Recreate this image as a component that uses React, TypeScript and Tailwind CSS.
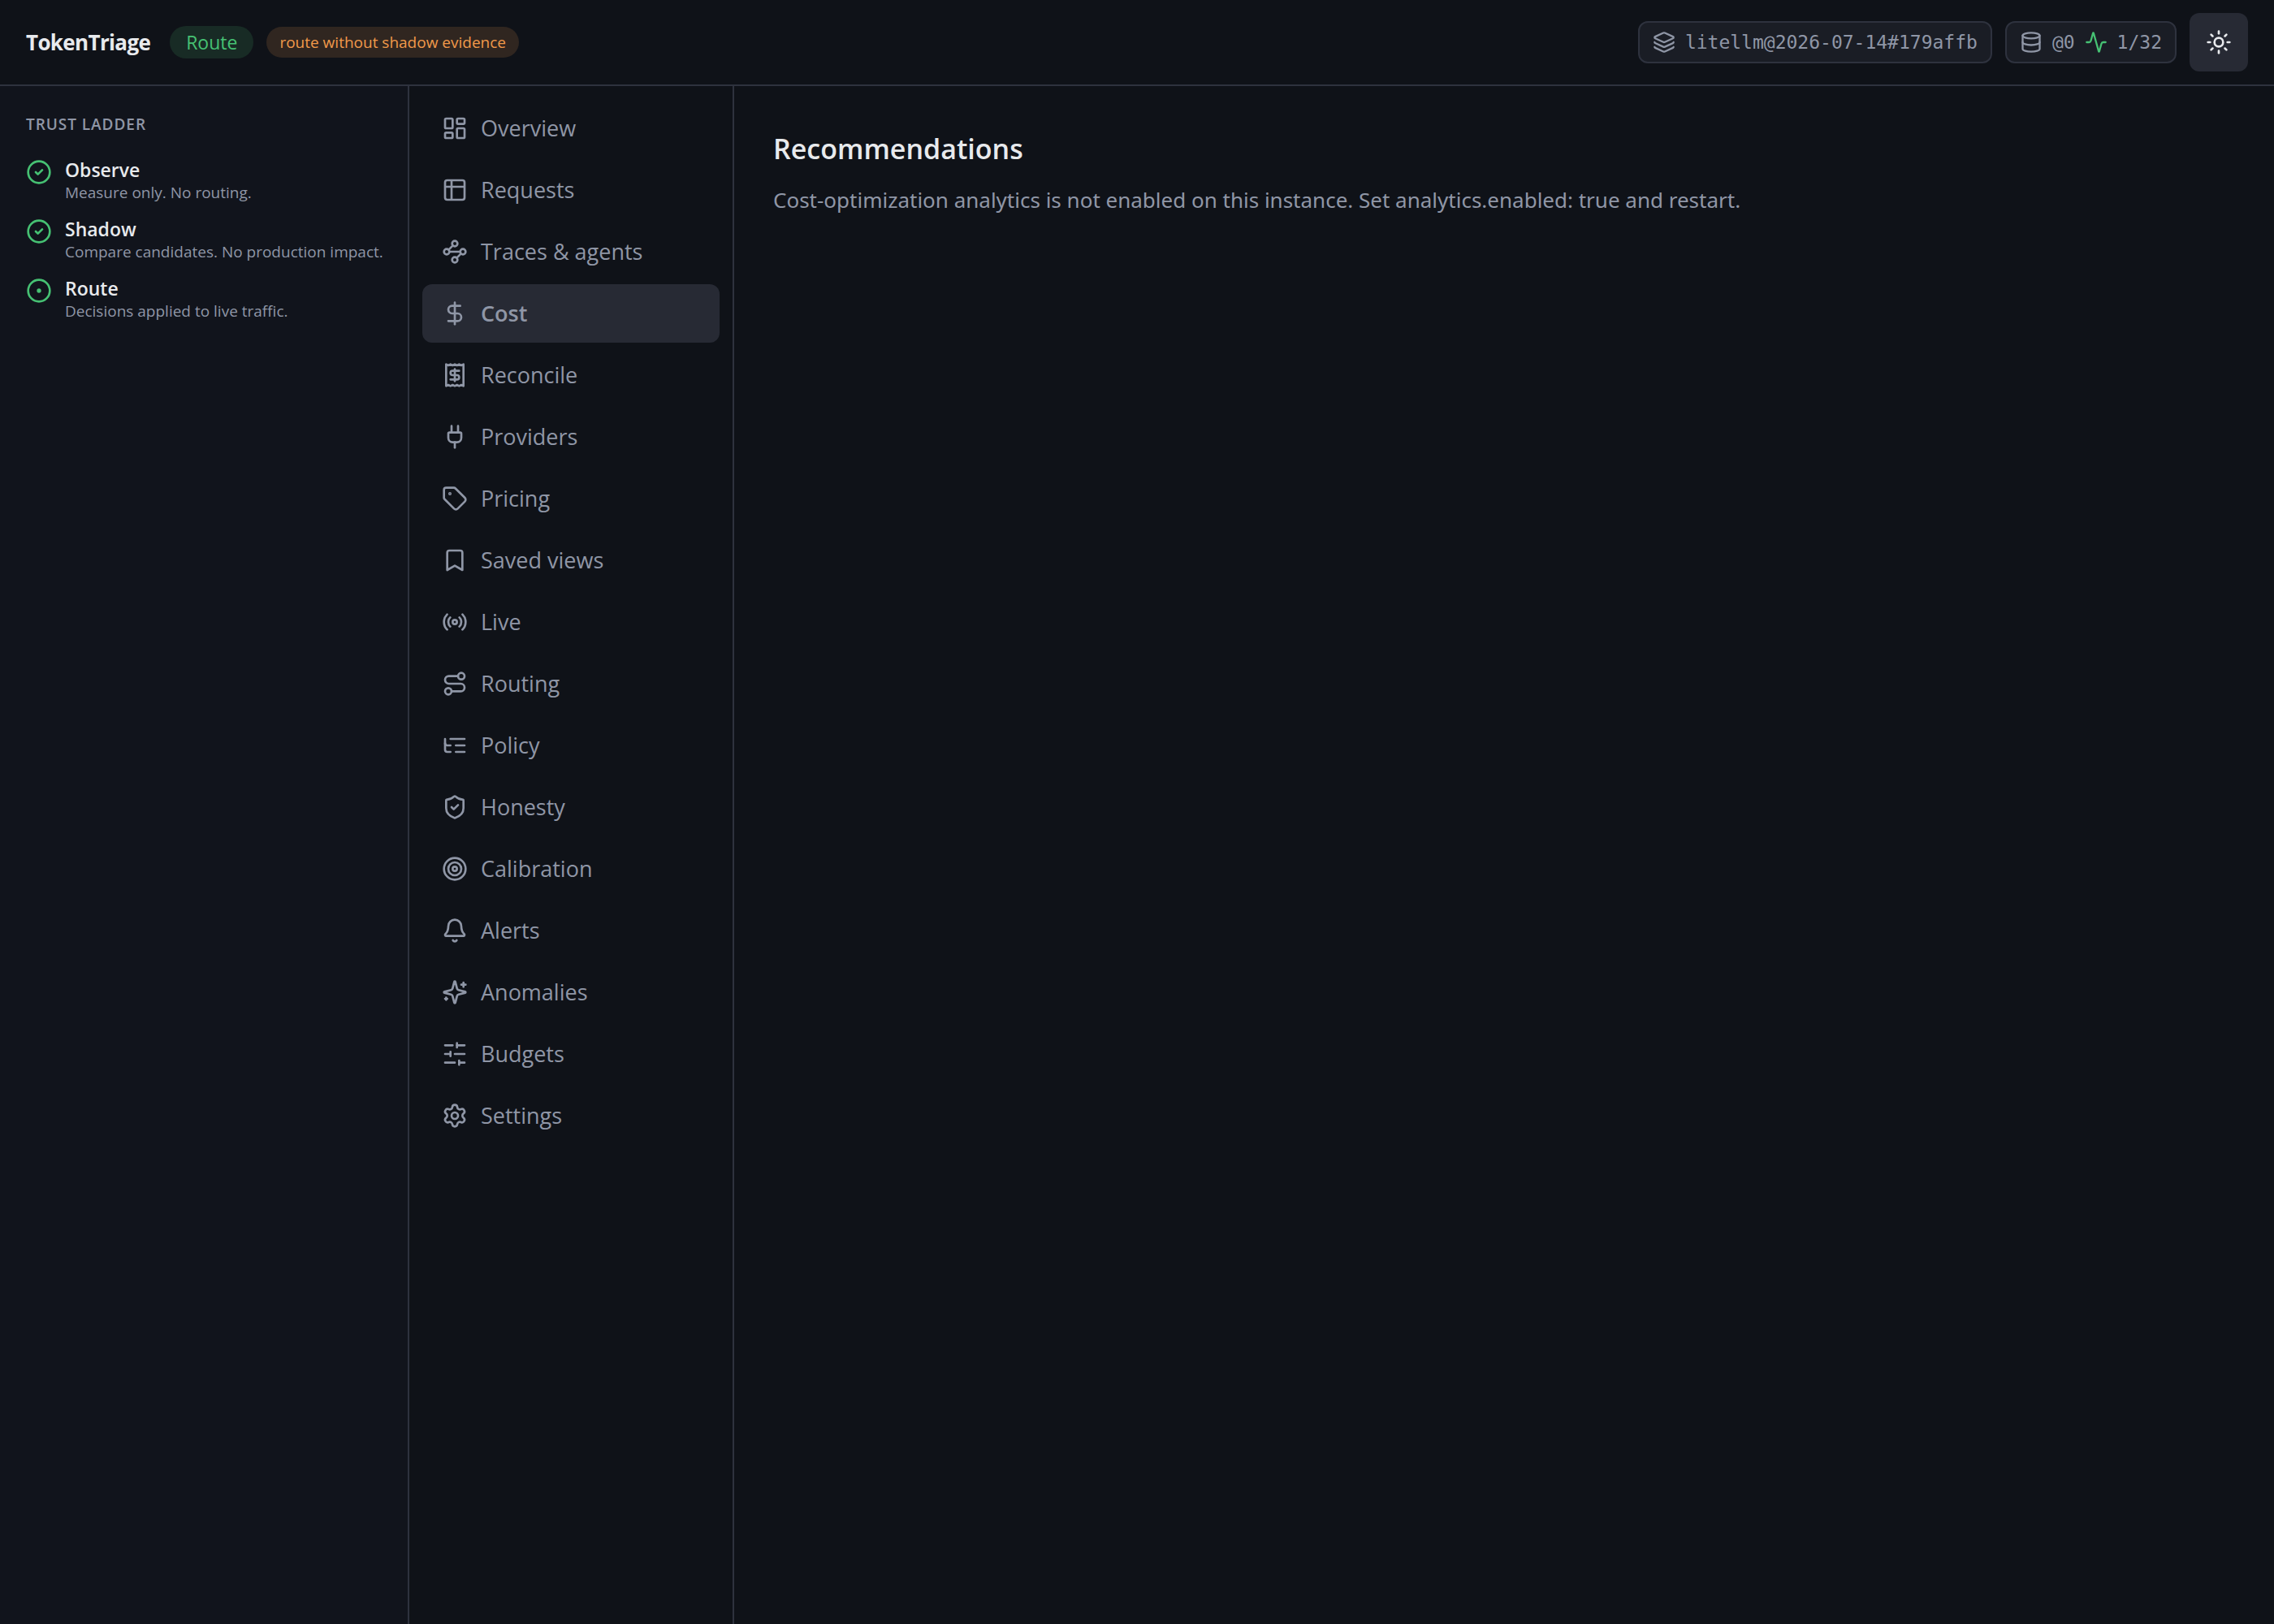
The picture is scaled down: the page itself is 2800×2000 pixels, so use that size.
import React from 'react';
import {
  Activity,
  Bell,
  Bookmark,
  CircleCheck,
  CircleDot,
  Database,
  DollarSign,
  Layers,
  LayoutDashboard,
  Plug,
  Radio,
  Receipt,
  Route,
  Settings,
  ShieldCheck,
  Sun,
  Table2,
  Tag,
  Target,
  Waypoints,
} from 'lucide-react';

type IconType = React.ComponentType<{ className?: string }>;

// Shared frame for the icons the package draws differently
const LineIcon: React.FC<{ className?: string; children: React.ReactNode }> = ({ className, children }) => (
  <svg
    className={className}
    viewBox="0 0 24 24"
    fill="none"
    stroke="currentColor"
    strokeWidth="2"
    strokeLinecap="round"
    strokeLinejoin="round"
    aria-hidden="true"
  >
    {children}
  </svg>
);

const TreeIcon: IconType = ({ className }) => (
  <LineIcon className={className}>
    <path d="M21 12h-8" />
    <path d="M21 6H8" />
    <path d="M21 18h-8" />
    <path d="M3 6v4c0 1.1.9 2 2 2h3" />
    <path d="M3 10v6c0 1.1.9 2 2 2h3" />
  </LineIcon>
);

const SparklesIcon: IconType = ({ className }) => (
  <LineIcon className={className}>
    <path d="M9.937 15.5A2 2 0 0 0 8.5 14.063l-6.135-1.582a.5.5 0 0 1 0-.962L8.5 9.936A2 2 0 0 0 9.937 8.5l1.582-6.135a.5.5 0 0 1 .963 0L14.063 8.5A2 2 0 0 0 15.5 9.937l6.135 1.581a.5.5 0 0 1 0 .964L15.5 14.063a2 2 0 0 0-1.437 1.437l-1.582 6.135a.5.5 0 0 1-.963 0z" />
    <path d="M20 3v4" />
    <path d="M22 5h-4" />
    <path d="M4 17v2" />
    <path d="M5 18H3" />
  </LineIcon>
);

const SlidersIcon: IconType = ({ className }) => (
  <LineIcon className={className}>
    <path d="M21 4h-7M10 4H3M21 12h-9M8 12H3M21 20h-5M12 20H3" />
    <path d="M14 2v4M8 10v4M16 18v4" />
  </LineIcon>
);

const NAV_ITEMS: { label: string; icon: IconType }[] = [
  { label: 'Overview', icon: LayoutDashboard },
  { label: 'Requests', icon: Table2 },
  { label: 'Traces & agents', icon: Waypoints },
  { label: 'Cost', icon: DollarSign },
  { label: 'Reconcile', icon: Receipt },
  { label: 'Providers', icon: Plug },
  { label: 'Pricing', icon: Tag },
  { label: 'Saved views', icon: Bookmark },
  { label: 'Live', icon: Radio },
  { label: 'Routing', icon: Route },
  { label: 'Policy', icon: TreeIcon },
  { label: 'Honesty', icon: ShieldCheck },
  { label: 'Calibration', icon: Target },
  { label: 'Alerts', icon: Bell },
  { label: 'Anomalies', icon: SparklesIcon },
  { label: 'Budgets', icon: SlidersIcon },
  { label: 'Settings', icon: Settings },
];

const LADDER: { title: string; text: string; icon: IconType }[] = [
  { title: 'Observe', text: 'Measure only. No routing.', icon: CircleCheck },
  { title: 'Shadow', text: 'Compare candidates. No production impact.', icon: CircleCheck },
  { title: 'Route', text: 'Decisions applied to live traffic.', icon: CircleDot },
];

const Header: React.FC = () => (
  <header className="flex items-center justify-between border-b-2 border-[#2e323e] bg-[#0f1218] px-8 py-4">
    <div className="flex items-center gap-4">
      <span className="mr-2 text-[26px] leading-10 font-bold tracking-tight text-[#e8eaed]">TokenTriage</span>
      <span className="rounded-full bg-[#182b25] px-5 text-[23px] leading-10 font-medium text-[#46c173]">Route</span>
      <span className="rounded-full bg-[#302620] px-4 text-[19px] leading-[38px] font-medium text-[#f0994a]">
        route without shadow evidence
      </span>
    </div>
    <div className="flex items-center gap-4 font-['DejaVu_Sans_Mono',monospace] text-[23px] text-[#8f96a6]">
      <div className="flex h-[52px] items-center gap-3 rounded-xl border-2 border-[#2e323e] bg-[#1a1d25] px-4">
        <Layers className="size-7" />
        <span>litellm@2026-07-14#179affb</span>
      </div>
      <div className="flex h-[52px] items-center gap-3 rounded-xl border-2 border-[#2e323e] bg-[#1a1d25] px-4">
        <Database className="size-7" />
        <span>@0</span>
        <Activity className="size-7 text-[#46c173]" />
        <span>1/32</span>
      </div>
      <button
        type="button"
        aria-label="Toggle theme"
        className="flex size-[72px] items-center justify-center rounded-xl bg-[#272a34] text-[#e8eaed]"
      >
        <Sun className="size-8" />
      </button>
    </div>
  </header>
);

const TrustLadder: React.FC = () => (
  <aside className="w-[504px] shrink-0 border-r-2 border-[#2e323e] bg-[#11141c] px-8 py-8">
    <h2 className="text-[19px] leading-[30px] font-semibold tracking-wider text-[#8f96a6] uppercase">Trust ladder</h2>
    <ol className="mt-[26px] flex flex-col gap-4">
      {LADDER.map(({ title, text, icon: Icon }) => (
        <li key={title} className="flex items-start gap-4">
          <Icon className="mt-0.5 size-8 shrink-0 text-[#46c173]" />
          <div className="whitespace-nowrap">
            <p className="text-[23px] leading-[30px] font-semibold text-[#e8eaed]">{title}</p>
            <p className="text-[19px] leading-[27px] text-[#8f96a6]">{text}</p>
          </div>
        </li>
      ))}
    </ol>
  </aside>
);

const SideNav: React.FC<{ active: string }> = ({ active }) => (
  <nav className="flex w-[400px] shrink-0 flex-col gap-1 border-r-2 border-[#2e323e] p-4">
    {NAV_ITEMS.map(({ label, icon: Icon }) => (
      <a
        key={label}
        href="#"
        aria-current={label === active ? 'page' : undefined}
        className={`flex h-[72px] items-center gap-4 rounded-xl px-6 text-[27px] ${
          label === active ? 'bg-[#272a34] font-semibold' : ''
        }`}
      >
        <Icon className="size-8 shrink-0" />
        <span>{label}</span>
      </a>
    ))}
  </nav>
);

const App: React.FC = () => (
  <div className="flex min-h-screen flex-col bg-[#0f1218] font-['Open_Sans','Noto_Sans',sans-serif] text-[#8f96a6]">
    <Header />
    <div className="flex flex-1">
      <TrustLadder />
      <SideNav active="Cost" />
      <main className="min-w-0 flex-1 p-12">
        <h1 className="text-[34px] leading-[58px] font-semibold text-[#e8eaed]">Recommendations</h1>
        <p className="mt-3.5 font-['Noto_Sans','Open_Sans',sans-serif] text-[26px] leading-10">
          Cost-optimization analytics is not enabled on this instance. Set analytics.enabled: true and restart.
        </p>
      </main>
    </div>
  </div>
);

export default App;
